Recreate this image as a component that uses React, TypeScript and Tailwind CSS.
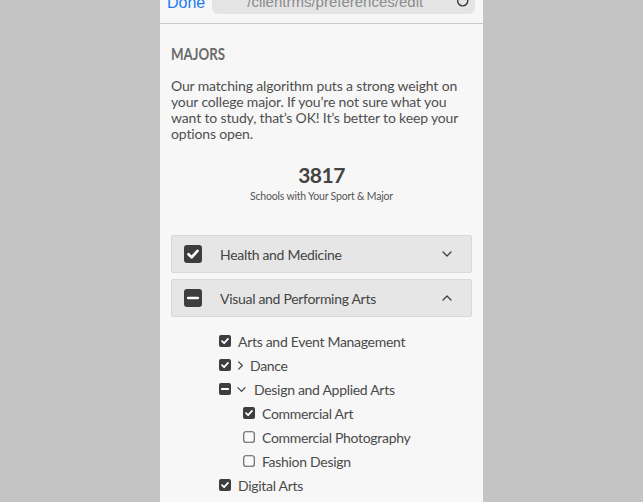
import React from "react";

const font = { fontFamily: "Lato, 'Noto Sans', sans-serif" };

function Box({ state, size }: { state: "on" | "off" | "mixed"; size: number }) {
  if (state === "off") {
    return (
      <svg width={size} height={size} viewBox="0 0 12 12" className="shrink-0">
        <rect x="0.75" y="0.75" width="10.5" height="10.5" rx="2" fill="#fafafa" stroke="#5a5a5a" strokeWidth="1.1" />
      </svg>
    );
  }
  return (
    <svg width={size} height={size} viewBox="0 0 12 12" className="shrink-0">
      <rect x="0" y="0" width="12" height="12" rx="2" fill="#3d3d3d" />
      {state === "on" ? (
        <path d="M3 6.2 L5.1 8.2 L9 3.9" fill="none" stroke="#ffffff" strokeWidth="1.8" strokeLinecap="round" strokeLinejoin="round" />
      ) : (
        <path d="M2.8 6 H9.2" stroke="#ffffff" strokeWidth="1.8" strokeLinecap="round" />
      )}
    </svg>
  );
}

function Chev({ dir, w = 10 }: { dir: "down" | "up" | "right"; w?: number }) {
  const d = dir === "down" ? "M1 3 L5 7 L9 3" : dir === "up" ? "M1 7 L5 3 L9 7" : "M3 1 L7 5 L3 9";
  return (
    <svg width={w} height={w} viewBox="0 0 10 10" className="shrink-0">
      <path d={d} fill="none" stroke="#3f3f3f" strokeWidth="1.3" strokeLinecap="round" strokeLinejoin="round" />
    </svg>
  );
}

function Row({ state, label, level = 0, chev }: { state: "on" | "off" | "mixed"; label: string; level?: number; chev?: "right" | "down" }) {
  return (
    <div className={`flex items-center h-[24px] ${level === 1 ? "pl-[72px]" : "pl-[48px]"}`}>
      <Box state={state} size={12} />
      {chev === "right" && (
        <span className="ml-[5px] mr-[4px] flex"><Chev dir="right" w={9} /></span>
      )}
      {chev === "down" && (
        <span className="ml-[6px] mr-[7px] flex"><Chev dir="down" w={9} /></span>
      )}
      <span className={`${chev ? "ml-[1px]" : "ml-[7px]"} text-[14px] tracking-[-0.3px] text-[#4a4a4a]`}>{label}</span>
    </div>
  );
}

export default function App() {
  return (
    <div className="w-full h-[502px] bg-[#c4c4c4] flex justify-center overflow-hidden">
      <div className="w-[323px] h-[502px] bg-[#f7f7f7] overflow-hidden" style={font}>
        {/* top bar */}
        <div className="-mt-[16px] h-[40px] border-b border-[#c9c9c9] bg-[#f7f7f7] flex items-start pt-[2px]">
          <span className="ml-[7px] mt-[5px] text-[16px] text-[#1b7cf4]" style={{ fontFamily: "'Liberation Sans', sans-serif" }}>Done</span>
          <div className="ml-[7px] w-[263px] h-[28px] rounded-[6px] bg-[#e4e4e4] flex items-center relative">
            <span className="ml-[35px] mt-[5px] text-[15px] text-[#8c8c8c]" style={{ fontFamily: "'Liberation Sans', sans-serif" }}>/clientrms/preferences/edit</span>
            <svg width="14" height="14" viewBox="0 0 14 14" className="absolute right-[5px] top-[8px]">
              <path d="M11.5 5.5 A5 5 0 1 1 8.5 2.2" fill="none" stroke="#3a3a3a" strokeWidth="1.4" strokeLinecap="round" />
            </svg>
          </div>
        </div>

        <div className="px-[11px]">
          <h1 className="mt-[20px] text-[17px] leading-[20px] font-bold text-[#6b6b6b] scale-x-[0.78] origin-left">MAJORS</h1>
          <p className="mt-[14px] text-[14px] tracking-[-0.15px] leading-[16px] text-[#4f4f4f]">
            Our matching algorithm puts a strong weight on your college major. If you’re not sure what you want to study, that’s OK! It’s better to keep your options open.
          </p>
          <div className="mt-[20px] flex flex-col items-center">
            <div className="text-[21px] leading-[26px] tracking-[-0.5px] font-bold text-[#444444]">3817</div>
            <div className="mt-[1px] text-[10.5px] leading-[14px] tracking-[-0.2px] text-[#555555]">Schools with Your Sport &amp; Major</div>
          </div>

          <div className="mt-[32px] flex flex-col gap-[6px]">
            <div className="h-[38px] bg-[#e6e6e6] border border-[#d8d8d8] rounded-[2px] flex items-center pl-[12px] pr-[19px]">
              <Box state="on" size={18} />
              <span className="ml-[18px] text-[14px] tracking-[-0.3px] text-[#444444] flex-1">Health and Medicine</span>
              <Chev dir="down" />
            </div>
            <div className="h-[38px] bg-[#e6e6e6] border border-[#d8d8d8] rounded-[2px] flex items-center pl-[12px] pr-[19px]">
              <Box state="mixed" size={18} />
              <span className="ml-[18px] text-[14px] tracking-[-0.3px] text-[#444444] flex-1">Visual and Performing Arts</span>
              <Chev dir="up" />
            </div>
          </div>

          <div className="mt-[12px] flex flex-col">
            <Row state="on" label="Arts and Event Management" />
            <Row state="on" label="Dance" chev="right" />
            <Row state="mixed" label="Design and Applied Arts" chev="down" />
            <Row state="on" label="Commercial Art" level={1} />
            <Row state="off" label="Commercial Photography" level={1} />
            <Row state="off" label="Fashion Design" level={1} />
            <Row state="on" label="Digital Arts" />
          </div>
        </div>
      </div>
    </div>
  );
}
